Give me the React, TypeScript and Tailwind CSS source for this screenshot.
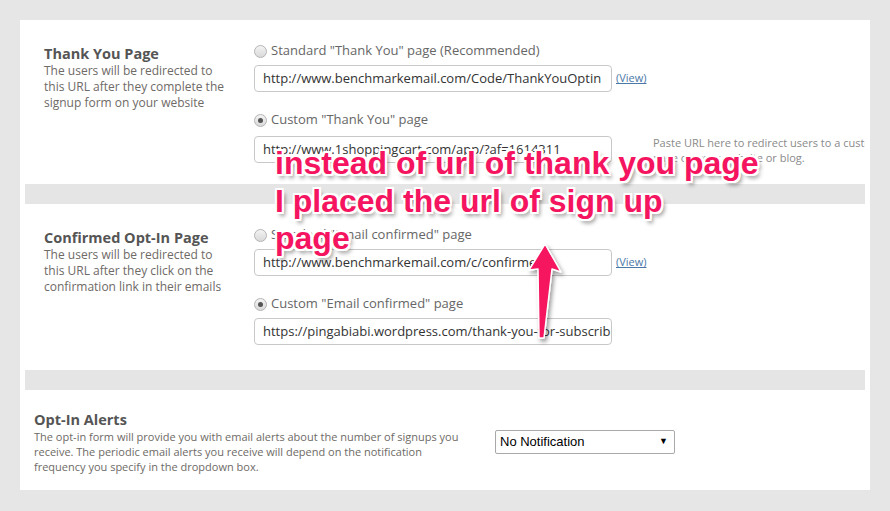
import React from "react";

const ui = "font-['Open_Sans','Lato',sans-serif]";

function Radio({ checked, label }: { checked?: boolean; label: string }) {
  return (
    <div className="flex items-center h-[16px]">
      <span className="w-[13px] h-[13px] rounded-full border border-[#b4b4b4] bg-gradient-to-b from-[#f4f4f4] to-[#d9d9d9] flex items-center justify-center shrink-0">
        {checked && <span className="w-[5px] h-[5px] rounded-full bg-[#555]" />}
      </span>
      <span className="ml-[4px] text-[13px] text-[#666] whitespace-nowrap">{label}</span>
    </div>
  );
}

function UrlInput({ value, view }: { value: string; view?: boolean }) {
  return (
    <div className="flex items-center">
      <div className="w-[358px] h-[27px] border border-[#c8c8c8] rounded-[4px] px-[8px] flex items-center overflow-hidden">
        <span className="text-[13px] text-[#333] whitespace-nowrap">{value}</span>
      </div>
      {view && <a className="ml-[4px] text-[11px] text-[#4a78a8] underline">(View)</a>}
    </div>
  );
}

function SideText({ title, lines }: { title: string; lines: string[] }) {
  return (
    <div className="w-[229px] shrink-0 pl-[19px] pt-[2px]">
      <div className="text-[14.5px] font-bold text-[#555] leading-[18px]">{title}</div>
      <div className="text-[12px] text-[#6e6a66] leading-[16px]">
        {lines.map((l) => (
          <div key={l}>{l}</div>
        ))}
      </div>
    </div>
  );
}

export default function App() {
  return (
    <div className={`relative w-[890px] h-[511px] bg-[#e6e6e6] pt-[20px] pl-[20px] ${ui}`}>
      <div className="w-[850px] h-[470px] bg-white px-[5px]">
        {/* Thank you page */}
        <div className="flex h-[164px] pt-[23px] overflow-hidden">
          <SideText
            title="Thank You Page"
            lines={["The users will be redirected to", "this URL after they complete the", "signup form on your website"]}
          />
          <div className="flex flex-col">
            <Radio label={'Standard "Thank You" page (Recommended)'} />
            <div className="mt-[6px]">
              <UrlInput value="http://www.benchmarkemail.com/Code/ThankYouOptin" view />
            </div>
            <div className="mt-[20px]">
              <Radio checked label={'Custom "Thank You" page'} />
            </div>
            <div className="mt-[6px] flex">
              <UrlInput value="http://www.1shoppingcart.com/app/?af=1614311" />
              <div className="ml-[41px] pt-[1px] text-[11px] leading-[15px] text-[#8a8a8a] whitespace-nowrap">
                <div>Paste URL here to redirect users to a custom</div>
                <div>page on your website or blog.</div>
              </div>
            </div>
          </div>
        </div>

        <div className="h-[20px] bg-[#e5e5e6]" />

        {/* Confirmed opt-in page */}
        <div className="flex h-[166px] pt-[23px] overflow-hidden">
          <SideText
            title="Confirmed Opt-In Page"
            lines={["The users will be redirected to", "this URL after they click on the", "confirmation link in their emails"]}
          />
          <div className="flex flex-col">
            <Radio label={'Standard "Email confirmed" page'} />
            <div className="mt-[6px]">
              <UrlInput value="http://www.benchmarkemail.com/c/confirmed" view />
            </div>
            <div className="mt-[20px]">
              <Radio checked label={'Custom "Email confirmed" page'} />
            </div>
            <div className="mt-[6px]">
              <UrlInput value="https://pingabiabi.wordpress.com/thank-you-for-subscribing/" />
            </div>
          </div>
        </div>

        <div className="h-[20px] bg-[#e5e5e6]" />

        {/* Opt-in alerts */}
        <div className="flex pt-[21px] pl-[9px]">
          <div className="w-[461px] shrink-0">
            <div className="text-[14.5px] font-bold text-[#555] leading-[18px]">Opt-In Alerts</div>
            <div className="text-[11px] text-[#6e6a66] leading-[15px]">
              <div>The opt-in form will provide you with email alerts about the number of signups you</div>
              <div>receive. The periodic email alerts you receive will depend on the notification</div>
              <div>frequency you specify in the dropdown box.</div>
            </div>
          </div>
          <div className="pt-[19px]">
            <div className="w-[180px] h-[24px] border border-[#a9a9a9] rounded-[2px] flex items-center justify-between px-[4px] font-['Liberation_Sans',Arial,sans-serif]">
              <span className="text-[13px] text-black">No Notification</span>
              <span className="text-[9px] text-black mr-[2px]">▼</span>
            </div>
          </div>
        </div>
      </div>

      {/* annotation */}
      <div className="absolute left-[275px] top-[145px] font-['Liberation_Sans',Arial,sans-serif] font-bold text-[32px] leading-[37.5px] text-[#f5145f] [text-shadow:-2px_-2px_0_#fff,2px_-2px_0_#fff,-2px_2px_0_#fff,2px_2px_0_#fff,0_-2px_0_#fff,0_2px_0_#fff,-2px_0_0_#fff,2px_0_0_#fff,3px_4px_4px_rgba(0,0,0,0.45)]">
        <div>instead of url of thank you page</div>
        <div>I placed the url of sign up</div>
        <div>page</div>
      </div>
      <svg className="absolute left-0 top-0" width="890" height="511">
        <defs>
          <filter id="sh" x="-50%" y="-50%" width="200%" height="200%">
            <feDropShadow dx="2" dy="3" stdDeviation="2" floodColor="#000" floodOpacity="0.4" />
          </filter>
        </defs>
        <path
          d="M545 244 L561 272 L552 269 L544 338 L539 338 L538 269 L529 270 Z"
          fill="#f5145f"
          stroke="#fff"
          strokeWidth="1.5"
          strokeLinejoin="round"
          filter="url(#sh)"
        />
      </svg>
    </div>
  );
}
